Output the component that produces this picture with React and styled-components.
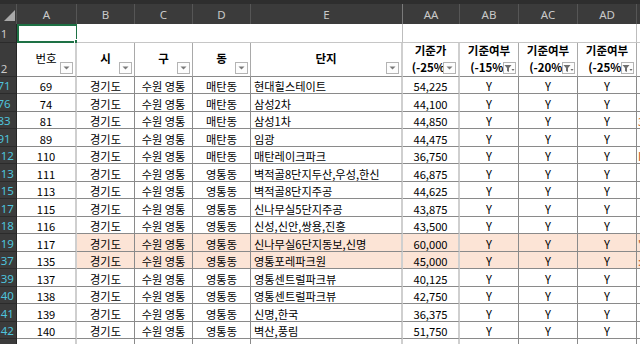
import React from 'react';
import styled, { createGlobalStyle } from 'styled-components';

const GlobalStyle = createGlobalStyle`
  *, *::before, *::after { box-sizing: border-box; }
  html, body { margin: 0; padding: 0; background: #ffffff; overflow: hidden; }
  body { font-family: "Noto Sans CJK KR", "Noto Sans", sans-serif; }
`;

const COLS = '25px 60px 58px 58px 58px 152px 57px 59px 59px 59px 40px';
const LIGHT = '#cfcfcf';
const DARK = '#8a8a8a';

const Sheet = styled.div`
  width: 685px;
  margin-left: -8px;
`;

const GridRow = styled.div`
  display: grid;
  grid-template-columns: ${COLS};
  height: ${p => p.$h}px;
`;

const ColHeadRow = styled(GridRow)`
  background: #3b3b3b;
  border-top: 4px solid #2e2e2e;
`;

const Corner = styled.div`
  display: flex;
  align-items: flex-end;
  justify-content: flex-end;
  padding: 0 1px 3px 0;
  border-right: 1px solid #555;
`;

const ColLetter = styled.div`
  display: flex;
  align-items: center;
  justify-content: center;
  padding-top: 1px;
  color: #c9c9c9;
  font-family: "Noto Sans", sans-serif;
  font-size: 11.5px;
  border-right: 1px solid ${p => (p.$hidden ? '#7a7a7a' : '#565656')};
`;

const RowNum = styled.div`
  background: #3b3b3b;
  color: ${p => (p.$filtered ? '#4ec3dc' : '#c9c9c9')};
  font-family: "Noto Sans", sans-serif;
  font-size: 11.5px;
  line-height: 13px;
  display: flex;
  align-items: ${p => (p.$mid ? 'center' : 'flex-end')};
  justify-content: center;
  padding-bottom: ${p => (p.$mid ? '0' : '1px')};
  border-bottom: 1px solid #2b2b2b;
  border-right: 1px solid #262626;
  overflow: hidden;
  white-space: nowrap;
`;

const Cell = styled.div`
  position: relative;
  display: flex;
  align-items: flex-end;
  justify-content: ${p => (p.$align === 'left' ? 'flex-start' : 'center')};
  padding: ${p => (p.$align === 'left' ? '0 0 0 3px' : '0')};
  font-size: 11.2px;
  line-height: 13px;
  color: #000;
  background: ${p => p.$bg || '#fff'};
  border-bottom: 1px solid ${DARK};
  border-right: ${p =>
    p.$edge === 'light' ? `2px solid ${LIGHT}` : p.$edge === 'none' ? '0' : `1px solid ${DARK}`};
  white-space: nowrap;
  overflow: hidden;
`;

const BlankCell = styled(Cell)`
  border-bottom: 1px solid #c6c6c6;
  border-right: ${p => (p.$edge === 'light' ? `1px solid #bdbdbd` : '0')};
  overflow: visible;
`;

const Selected = styled.div`
  position: absolute;
  inset: 0 -1px -1px 0;
  border: 2px solid #1e7145;
  pointer-events: none;
`;

const Handle = styled.span`
  position: absolute;
  right: -4px;
  bottom: -4px;
  width: 6px;
  height: 6px;
  background: #1e7145;
  border: 1px solid #fff;
`;

const HeadCell = styled.div`
  position: relative;
  display: flex;
  flex-direction: column;
  align-items: center;
  justify-content: center;
  font-size: 11.5px;
  font-weight: ${p => (p.$regular ? 400 : 700)};
  line-height: 17px;
  color: #000;
  background: #fff;
  border-bottom: 1px solid ${DARK};
  border-right: ${p => (p.$edge === 'light' ? `2px solid ${LIGHT}` : `1px solid #a9a9a9`)};
  white-space: nowrap;
  overflow: hidden;
  padding-bottom: ${p => (p.$two ? '1px' : '3px')};
`;

const FilterBtn = styled.span`
  position: absolute;
  right: 2px;
  bottom: 2px;
  width: 13px;
  height: 12px;
  border: 1px solid #b4b4b4;
  background: #fdfdfd;
  display: flex;
  align-items: center;
  justify-content: center;
`;

const Arrow = () => (
  <svg width="7" height="4" viewBox="0 0 7 4">
    <path d="M0.5 0.5 H6.5 L3.5 3.5 Z" fill="#7a7a7a" />
  </svg>
);

const Funnel = () => (
  <svg width="11" height="9" viewBox="0 0 11 9">
    <path d="M0.5 1 H7.5 L5 4 V8 L3 7 V4 Z" fill="#6f6f6f" />
    <path d="M7.5 5 H10.5 L9 7 Z" fill="#6f6f6f" />
  </svg>
);

const Triangle = () => (
  <svg width="11" height="11" viewBox="0 0 11 11">
    <path d="M11 0 V11 H0 Z" fill="#a9a9a9" />
  </svg>
);

const AeText = styled.span`
  color: #c55a11;
  margin-left: -2px;
`;

const letters = [
  { t: 'A' }, { t: 'B' }, { t: 'C' }, { t: 'D' }, { t: 'E', hidden: true },
  { t: 'AA' }, { t: 'AB' }, { t: 'AC' }, { t: 'AD' }, { t: '' },
];

const headers = [
  { l1: '번호', regular: true, edge: 'light' },
  { l1: '시' },
  { l1: '구' },
  { l1: '동' },
  { l1: '단지', edge: 'light' },
  { l1: '기준가', l2: '(-25%)', edge: 'light' },
  { l1: '기준여부', l2: '(-15%)', funnel: true },
  { l1: '기준여부', l2: '(-20%)', funnel: true },
  { l1: '기준여부', l2: '(-25%)', funnel: true },
];

const data = [
  [71, 69, '매탄동', '현대힐스테이트', '54,225'],
  [76, 74, '매탄동', '삼성2차', '44,100'],
  [83, 81, '매탄동', '삼성1차', '44,850', false, '3'],
  [91, 89, '매탄동', '임광', '44,475'],
  [112, 110, '매탄동', '매탄레이크파크', '36,750', false, 'I'],
  [113, 111, '영통동', '벽적골8단지두산,우성,한신', '46,875'],
  [115, 113, '영통동', '벽적골8단지주공', '44,625'],
  [117, 115, '영통동', '신나무실5단지주공', '43,875'],
  [118, 116, '영통동', '신성,신안,쌍용,진흥', '43,500'],
  [119, 117, '영통동', '신나무실6단지동보,신명', '60,000', true, "'"],
  [137, 135, '영통동', '영통포레파크원', '45,000', true, ':'],
  [139, 137, '영통동', '영통센트럴파크뷰', '40,125'],
  [140, 138, '영통동', '영통센트럴파크뷰', '42,750'],
  [141, 139, '영통동', '신명,한국', '36,375'],
  [142, 140, '영통동', '벽산,풍림', '51,750'],
];

const HL = '#fce4d6';

export default function App() {
  return (
    <>
      <GlobalStyle />
      <Sheet>
        <ColHeadRow $h={24}>
          <Corner><Triangle /></Corner>
          {letters.map((c, i) => (
            <ColLetter key={i} $hidden={c.hidden}>{c.t}</ColLetter>
          ))}
        </ColHeadRow>

        <GridRow $h={19}>
          <RowNum $mid>1</RowNum>
          <BlankCell>
            <Selected><Handle /></Selected>
          </BlankCell>
          <BlankCell />
          <BlankCell />
          <BlankCell />
          <BlankCell $edge="light" />
          <BlankCell />
          <BlankCell />
          <BlankCell />
          <BlankCell $edge="light" />
          <BlankCell />
        </GridRow>

        <GridRow $h={34}>
          <RowNum>2</RowNum>
          {headers.map((h, i) => (
            <HeadCell key={i} $regular={h.regular} $edge={h.edge} $two={!!h.l2}>
              <span>{h.l1}</span>
              {h.l2 && <span>{h.l2}</span>}
              <FilterBtn>{h.funnel ? <Funnel /> : <Arrow />}</FilterBtn>
            </HeadCell>
          ))}
          <HeadCell />
        </GridRow>

        {data.map((r, i) => {
          const [rn, no, dong, name, price, hl, ae] = r;
          const bg = hl ? HL : undefined;
          return (
            <GridRow key={rn} $h={i % 2 === 0 ? 17 : 18}>
              <RowNum $filtered>{rn}</RowNum>
              <Cell $edge="light">{no}</Cell>
              <Cell $bg={bg}>경기도</Cell>
              <Cell $bg={bg}>수원 영통</Cell>
              <Cell $bg={bg}>{dong}</Cell>
              <Cell $bg={bg} $align="left" $edge="light">{name}</Cell>
              <Cell $bg={bg} $edge="light">{price}</Cell>
              <Cell $bg={bg}>Y</Cell>
              <Cell $bg={bg}>Y</Cell>
              <Cell $bg={bg}>Y</Cell>
              <Cell $bg={bg} $align="left" $edge="none">{ae && <AeText>{ae}</AeText>}</Cell>
            </GridRow>
          );
        })}

        <GridRow $h={17}>
          <RowNum $filtered>143</RowNum>
          <Cell $edge="light" />
          <Cell />
          <Cell />
          <Cell />
          <Cell $align="left" $edge="light" />
          <Cell $edge="light" />
          <Cell />
          <Cell />
          <Cell />
          <Cell $edge="none" />
        </GridRow>
      </Sheet>
    </>
  );
}
